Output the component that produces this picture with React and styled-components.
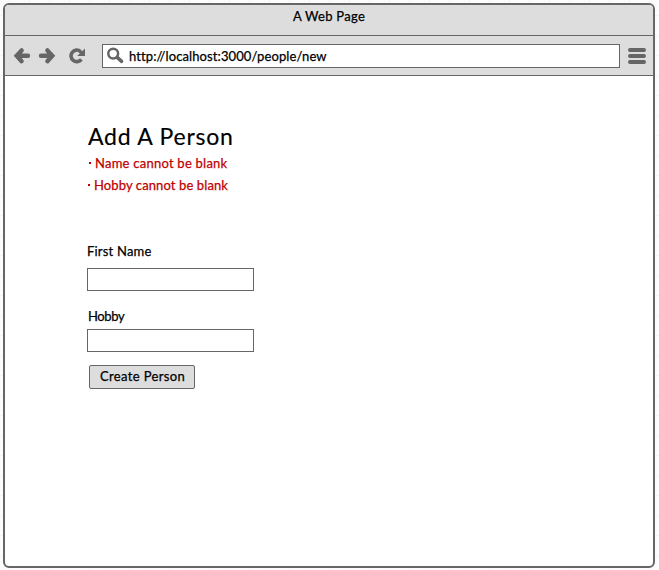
import React from 'react';
import styled, { createGlobalStyle } from 'styled-components';

const GlobalStyle = createGlobalStyle`
  * { box-sizing: border-box; }
  body {
    margin: 0;
    background-color: #fcfcfc;
    background-image:
      linear-gradient(90deg, #f4f4f4 1px, transparent 1px),
      linear-gradient(#f4f4f4 1px, transparent 1px);
    background-size: 20px 20px;
    background-position: 9px 15px;
    overflow: hidden;
    font-family: Lato, sans-serif;
    color: #000;
  }
`;

const Canvas = styled.div`
  height: 570px;
  padding: 3px 4px 2px 3px;
`;

const BrowserWindow = styled.div`
  display: flex;
  flex-direction: column;
  width: 652px;
  height: 565px;
  border: 2px solid #666;
  border-radius: 6px;
  background: #fff;
  overflow: hidden;
`;

const TitleBar = styled.header`
  display: flex;
  justify-content: center;
  height: 31px;
  flex: none;
  padding-top: 2px;
  border-bottom: 1px solid #666;
  background: #ddd;
`;

const Toolbar = styled.nav`
  display: flex;
  align-items: center;
  height: 40px;
  flex: none;
  padding: 0 7px 0 8px;
  border-bottom: 1px solid #666;
  background: #ddd;
`;

const NavIcon = styled.svg`
  display: block;
  flex: none;
  width: ${(p) => p.$w}px;
  height: 18px;
  margin-right: ${(p) => p.$gap || 0}px;
  fill: none;
  stroke: #666;
`;

const AddressBar = styled.div`
  display: flex;
  align-items: center;
  width: 518px;
  height: 24px;
  margin-right: 8px;
  padding-left: 4px;
  border: 1px solid #666;
  background: #fff;
`;

const Label = styled.span`
  display: block;
  white-space: pre;
  font-size: 13px;
  font-weight: 400;
  line-height: 18px;
  -webkit-text-stroke: 0.25px currentColor;
  letter-spacing: ${(p) => p.$track || 0}px;
`;

const Page = styled.main`
  display: flex;
  flex-direction: column;
  align-items: flex-start;
  padding: 45px 0 0 82px;
`;

const Heading = styled.h1`
  margin: 0 0 0 1px;
  font-size: 23px;
  font-weight: 400;
  line-height: 30px;
  white-space: pre;
  -webkit-text-stroke: 0.15px currentColor;
  letter-spacing: ${(p) => p.$track}px;
`;

const Errors = styled.ul`
  list-style: none;
  margin: 3px 0 0;
  padding: 0;
  color: #c00000;
`;

const ErrorItem = styled.li`
  display: flex;
  height: 22px;
  padding-left: ${(p) => p.$indent}px;
`;

const Bullet = styled.span`
  flex: none;
  width: 2px;
  height: 2px;
  margin: 8px 4px 0 0;
  background: currentColor;
`;

const Field = styled.label`
  display: block;
  margin-top: ${(p) => p.$top}px;
`;

const FieldName = styled(Label)`
  margin-left: ${(p) => p.$indent || 0}px;
  margin-bottom: ${(p) => p.$gap}px;
`;

const TextInput = styled.input`
  display: block;
  width: 167px;
  height: 23px;
  border: 1px solid #666;
  border-radius: 0;
  padding: 0 4px;
  background: #fff;
  outline: none;
`;

const SubmitButton = styled.button`
  display: flex;
  width: 106px;
  height: 24px;
  margin: 13px 0 0 2px;
  padding: 1px 0 0 10px;
  border: 1px solid #666;
  border-radius: 2px;
  background: #ddd;
  color: #000;
  font-family: inherit;
`;

export default function App() {
  return (
    <Canvas>
      <GlobalStyle />
      <BrowserWindow>
        <TitleBar>
          <Label $track={0.28}>A Web Page</Label>
        </TitleBar>
        <Toolbar>
          <NavIcon $w={18} $gap={7} viewBox="0 0 18 18" strokeWidth="4.4">
            <path d="M8.6 3.4 L3.7 8.8 L8.6 14.2 M4.5 8.8 H15" strokeLinecap="round" />
          </NavIcon>
          <NavIcon $w={18} $gap={12} viewBox="0 0 18 18" strokeWidth="4.4">
            <path d="M9.4 3.4 L14.3 8.8 L9.4 14.2 M13.5 8.8 H3" strokeLinecap="round" />
          </NavIcon>
          <NavIcon $w={18} $gap={16} viewBox="0 0 18 18" strokeWidth="3.6">
            <path d="M12.4 4.3 A5.8 5.8 0 1 0 13.4 12.4" />
            <path d="M17 1.6 V9 H9.2 L11.8 6.4 L10.4 4.8 L13 3.4 L14.4 4 Z" fill="#666" stroke="none" />
          </NavIcon>
          <AddressBar>
            <NavIcon $w={18} $gap={4} viewBox="0 0 18 18">
              <circle cx="6.2" cy="6.6" r="4.9" strokeWidth="2.5" />
              <path d="M10.2 10.4 L14.6 14.4" strokeWidth="3.5" strokeLinecap="round" />
            </NavIcon>
            <Label $track={0.1}>http://localhost:3000/people/new</Label>
          </AddressBar>
          <NavIcon $w={18} viewBox="0 0 18 18" strokeWidth="4" strokeLinecap="round">
            <path d="M2 3 H16 M2 9 H16 M2 15 H16" />
          </NavIcon>
        </Toolbar>
        <Page>
          <Heading $track={0.78}>Add A Person</Heading>
          <Errors>
            <ErrorItem $indent={2}>
              <Bullet />
              <Label $track={0.24}>Name cannot be blank</Label>
            </ErrorItem>
            <ErrorItem $indent={1}>
              <Bullet />
              <Label $track={0.11}>Hobby cannot be blank</Label>
            </ErrorItem>
          </Errors>
          <Field $top={44}>
            <FieldName $gap={8} $track={0.2}>First Name</FieldName>
            <TextInput />
          </Field>
          <Field $top={16}>
            <FieldName $gap={4} $indent={1} $track={-0.4}>Hobby</FieldName>
            <TextInput />
          </Field>
          <SubmitButton type="button">
            <Label $track={0.36}>Create Person</Label>
          </SubmitButton>
        </Page>
      </BrowserWindow>
    </Canvas>
  );
}
